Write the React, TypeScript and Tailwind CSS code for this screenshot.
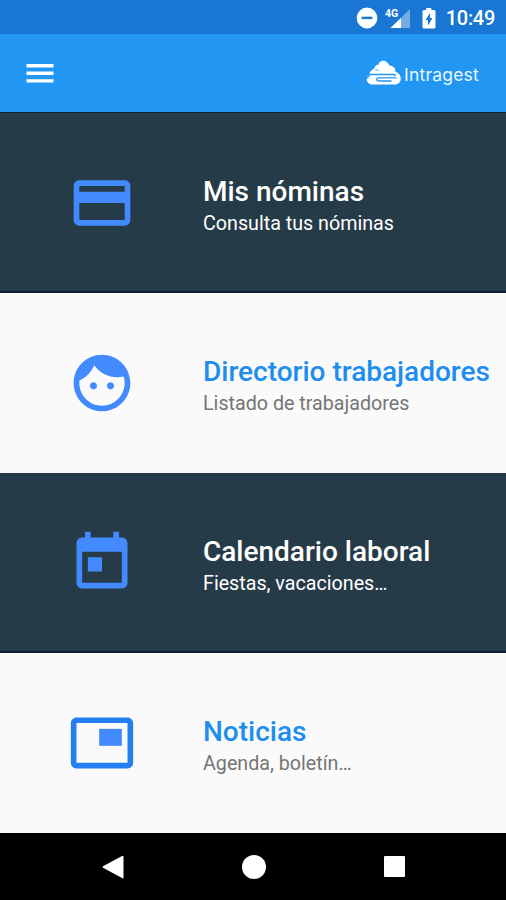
import React from 'react'

type MenuEntry = {
  title: string
  subtitle: string
  dark: boolean
  icon: React.ReactNode
}

const entries: MenuEntry[] = [
  {
    title: 'Mis nóminas',
    subtitle: 'Consulta tus nóminas',
    dark: true,
    icon: (
      <path d="M20 4H4c-1.11 0-1.99.89-1.99 2L2 18c0 1.11.89 2 2 2h16c1.11 0 2-.89 2-2V6c0-1.11-.89-2-2-2zm0 14H4v-6h16v6zm0-10H4V6h16v2z" />
    ),
  },
  {
    title: 'Directorio trabajadores',
    subtitle: 'Listado de trabajadores',
    dark: false,
    icon: (
      <path d="M9 11.75c-.69 0-1.25.56-1.25 1.25s.56 1.25 1.25 1.25 1.25-.56 1.25-1.25-.56-1.25-1.25-1.25zm6 0c-.69 0-1.25.56-1.25 1.25s.56 1.25 1.25 1.25 1.25-.56 1.25-1.25-.56-1.25-1.25-1.25zM12 2C6.48 2 2 6.48 2 12s4.48 10 10 10 10-4.48 10-10S17.52 2 12 2zm0 18c-4.41 0-8-3.59-8-8 0-.29.02-.58.05-.86 2.36-1.05 4.23-2.98 5.21-5.37C11.07 8.33 14.05 10 17.42 10c.78 0 1.53-.09 2.25-.26.21.71.33 1.47.33 2.26 0 4.41-3.59 8-8 8z" />
    ),
  },
  {
    title: 'Calendario laboral',
    subtitle: 'Fiestas, vacaciones…',
    dark: true,
    icon: (
      <path d="M19 3h-1V1h-2v2H8V1H6v2H5c-1.11 0-1.99.9-1.99 2L3 19c0 1.1.89 2 2 2h14c1.1 0 2-.9 2-2V5c0-1.1-.9-2-2-2zm0 16H5V8h14v11zM7 10h5v5H7z" />
    ),
  },
  {
    title: 'Noticias',
    subtitle: 'Agenda, boletín…',
    dark: false,
    icon: (
      <>
        <path d="M19 7h-8v6h8V7z" />
        <path
          fill="#2480f2"
          d="M21 3H3c-1.1 0-2 .9-2 2v14c0 1.1.9 1.98 2 1.98h18c1.1 0 2-.88 2-1.98V5c0-1.1-.9-2-2-2zm0 16.01H3V4.98h18v14.03z"
        />
      </>
    ),
  },
]

function StatusBar() {
  return (
    <div className="flex h-[34px] items-center justify-end bg-[#1976d2] pt-px pr-[11px] text-white">
      {/* Do not disturb */}
      <svg className="mr-[7px] h-[22px] w-[22px]" viewBox="0 0 22 22">
        <circle cx="11" cy="11" r="10.4" fill="#fff" />
        <rect x="5.6" y="9.7" width="10.8" height="2.4" fill="#1976d2" />
      </svg>
      {/* 4G signal */}
      <svg className="mr-[10px] h-[22px] w-[26px]" viewBox="0 0 26 22">
        <path d="M25 2v19H5.5z" fill="#fff" opacity=".4" />
        <path d="M16 11v10H5.5z" fill="#fff" />
        <text x="0" y="9.5" fontSize="10.5" fontWeight="700" fontFamily="Roboto, sans-serif" fill="#fff">
          4G
        </text>
      </svg>
      {/* Battery */}
      <svg className="mr-[9px] h-[22px] w-[16px]" viewBox="0 0 16 22">
        <path d="M5.3 1h5v2H13a1.5 1.5 0 0 1 1.5 1.5V20a1.5 1.5 0 0 1-1.5 1.5H3A1.5 1.5 0 0 1 1.5 20V4.5A1.5 1.5 0 0 1 3 3h2.3z" fill="#fff" />
        <path d="M9 6v5h2.5L7 18.5V13H4.5z" fill="#1976d2" />
      </svg>
      <span className="pt-px text-[20px] leading-none font-medium tracking-[-0.3px]">10:49</span>
    </div>
  )
}

function Logo() {
  return (
    <div className="flex items-center">
      <svg className="h-[26px] w-[36px]" viewBox="0 0 36 26">
        <path
          d="M6.5 24.5C3 24.5.8 22.3.8 19.5c0-2.500 1-4.300 2.900-5.200C3.800 11.500 5.500 9.500 8 9c.3-2.400 1.600-4 3.600-4.600l.6 1C13 2.400 14.500.8 17 .8c3.500 0 5 2.600 6.500 4.600 4 .4 6 3 6 6.600 3 .6 5.300 3.500 5.300 6.500 0 3.500-2.500 6-6 6z"
          fill="#fff"
        />
        <path
          d="M1.5 18.5c.5-2.500 2-4 4.500-4h20.500c1.500 0 2.500.4 3.200 1.200M30.500 17.800H13c-3 0-3 3.200 0 3.200h12.500"
          fill="none"
          stroke="#2196f3"
          strokeWidth="1.3"
        />
        <path d="M9 10.2c1.500-.6 2.800-.3 3.700.6" fill="none" stroke="#2196f3" strokeWidth=".8" />
      </svg>
      <span className="ml-[2px] pt-[3px] font-[Inter] text-[17.5px] leading-none tracking-[0.2px] text-[#eaf7ff]">Intragest</span>
    </div>
  )
}

function AppBar() {
  return (
    <header className="flex h-[79px] items-center justify-between border-b border-[#0e2435] bg-[#2196f3] pr-[27px] pl-[22px]">
      <svg className="h-9 w-9" viewBox="0 0 24 24" fill="#fff">
        <path d="M3 18.4h18v-2.300H3zm0-5.050h18v-2.300H3zM3 6v2.300h18V6z" />
      </svg>
      <Logo />
    </header>
  )
}

function MenuRow({ title, subtitle, dark, icon }: MenuEntry) {
  return (
    <section
      className={`flex h-[180px] items-center ${dark ? 'bg-[#263b48] shadow-[inset_0_-2px_0_#0c1c38]' : 'bg-[#fafafa]'}`}
    >
      <div className="flex w-[203px] shrink-0 justify-center">
        <svg className="h-[68px] w-[68px]" viewBox="0 0 24 24" fill="#448aff">
          {icon}
        </svg>
      </div>
      <div className="pt-2 whitespace-nowrap">
        <h2 className={`text-[28px] leading-[33px] font-medium ${dark ? 'text-white' : 'text-[#1e8eee]'}`}>{title}</h2>
        <p className={`text-[19.7px] leading-8 ${dark ? 'text-white' : 'text-[#757575]'}`}>{subtitle}</p>
      </div>
    </section>
  )
}

function NavigationBar() {
  return (
    <nav className="flex h-[67px] items-center justify-between bg-black px-[101px]">
      <svg className="h-6 w-6" viewBox="0 0 24 24" fill="#fff">
        <path d="M21.5.7q1 0 1 1v21q0 1-1 .6L2 12.8q-1-.8 0-1.600z" />
      </svg>
      <div className="mr-[2px] h-6 w-6 rounded-full bg-white" />
      <div className="h-[21px] w-[21px] rounded-[1px] bg-white" />
    </nav>
  )
}

export default function App() {
  return (
    <div className="flex h-[900px] w-[506px] flex-col overflow-hidden font-[Roboto,sans-serif]">
      <StatusBar />
      <AppBar />
      <main>
        {entries.map((entry) => (
          <MenuRow key={entry.title} {...entry} />
        ))}
      </main>
      <NavigationBar />
    </div>
  )
}
